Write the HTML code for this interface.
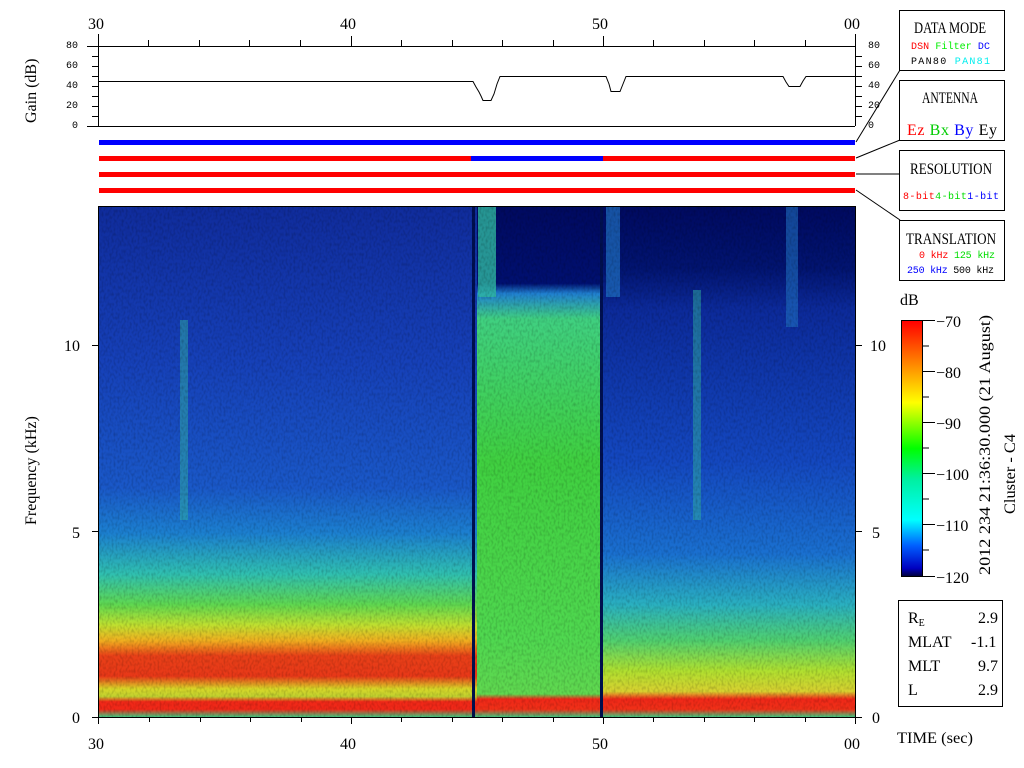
<!DOCTYPE html>
<html><head><style>
body{margin:0;background:#fff;width:1024px;height:768px;overflow:hidden}
svg{display:block}
text{font-family:"Liberation Serif",serif;fill:#000}
.m{font-family:"Liberation Mono",monospace}
</style></head><body>
<svg width="1024" height="768" viewBox="0 0 1024 768" xmlns="http://www.w3.org/2000/svg">
<defs>
<linearGradient id="gA" x1="0" y1="0" x2="0" y2="1">
<stop offset="0" stop-color="#102c9c"/><stop offset="0.3" stop-color="#1640b8"/>
<stop offset="0.55" stop-color="#1a58c8"/><stop offset="0.64" stop-color="#1c80d0"/>
<stop offset="0.72" stop-color="#30c0b0"/><stop offset="0.78" stop-color="#60d850"/>
<stop offset="0.82" stop-color="#c0e030"/><stop offset="0.85" stop-color="#f0b020"/>
<stop offset="0.88" stop-color="#e84018"/><stop offset="0.92" stop-color="#e83818"/>
<stop offset="0.945" stop-color="#d8d828"/><stop offset="0.96" stop-color="#c0d030"/>
<stop offset="0.97" stop-color="#f02818"/><stop offset="0.985" stop-color="#f02818"/>
<stop offset="1" stop-color="#40c880"/></linearGradient>
<linearGradient id="gB" x1="0" y1="0" x2="0" y2="1">
<stop offset="0" stop-color="#000a60"/><stop offset="0.15" stop-color="#001070"/>
<stop offset="0.17" stop-color="#2080d0"/><stop offset="0.22" stop-color="#40d080"/>
<stop offset="0.5" stop-color="#40d040"/><stop offset="0.85" stop-color="#50d850"/>
<stop offset="0.955" stop-color="#60d850"/><stop offset="0.965" stop-color="#f02818"/>
<stop offset="0.985" stop-color="#f03018"/><stop offset="1" stop-color="#40c880"/></linearGradient>
<linearGradient id="gC" x1="0" y1="0" x2="0" y2="1">
<stop offset="0" stop-color="#000a60"/><stop offset="0.12" stop-color="#021470"/>
<stop offset="0.2" stop-color="#0c2a9a"/><stop offset="0.5" stop-color="#1448c0"/>
<stop offset="0.68" stop-color="#1a70d0"/><stop offset="0.78" stop-color="#2ab0c0"/>
<stop offset="0.85" stop-color="#50d070"/><stop offset="0.91" stop-color="#b0e030"/>
<stop offset="0.95" stop-color="#d8d030"/><stop offset="0.965" stop-color="#f02818"/>
<stop offset="0.985" stop-color="#f03018"/><stop offset="1" stop-color="#40c880"/></linearGradient>
<linearGradient id="cb" x1="0" y1="0" x2="0" y2="1">
<stop offset="0" stop-color="#ff0000"/><stop offset="0.2" stop-color="#ffa000"/>
<stop offset="0.32" stop-color="#ffff00"/><stop offset="0.5" stop-color="#00ff00"/>
<stop offset="0.62" stop-color="#00f0a0"/><stop offset="0.78" stop-color="#00ffff"/>
<stop offset="0.88" stop-color="#0060ff"/><stop offset="0.97" stop-color="#0000c0"/>
<stop offset="1" stop-color="#000040"/></linearGradient>
<filter id="nz" x="0" y="0" width="1" height="1"><feTurbulence type="fractalNoise" baseFrequency="0.5 0.3" numOctaves="1" result="t"/><feColorMatrix type="matrix" values="0 0 0 0 0  0 0 0 0 0  0 0 0 0 0  0 0 0 -1.2 0.7" in="t" result="a"/><feComposite in="a" in2="SourceGraphic" operator="in"/></filter>
</defs>
<rect x="99" y="207" width="378" height="510" fill="url(#gA)"/>
<rect x="477" y="207" width="126" height="510" fill="url(#gB)"/>
<rect x="603" y="207" width="252" height="510" fill="url(#gC)"/>
<rect x="478" y="207" width="18" height="90" fill="#30b8a0" opacity="0.8"/>
<rect x="606" y="207" width="14" height="90" fill="#2070c0" opacity="0.7"/>
<rect x="786" y="207" width="12" height="120" fill="#2070c0" opacity="0.6"/>
<rect x="180" y="320" width="8" height="200" fill="#30b0a0" opacity="0.5"/>
<rect x="693" y="290" width="8" height="230" fill="#30b0a0" opacity="0.5"/>
<rect x="472" y="207" width="3" height="510" fill="#001050"/>
<rect x="600" y="207" width="3" height="510" fill="#001050"/>
<rect x="99" y="207" width="756" height="510" fill="#000" filter="url(#nz)" opacity="0.35"/>
<g stroke="#000" stroke-width="1" fill="none">
<rect x="98.5" y="206.5" width="757" height="511"/>
<line x1="98.5" y1="718" x2="98.5" y2="724"/><line x1="351.5" y1="718" x2="351.5" y2="724"/><line x1="603.5" y1="718" x2="603.5" y2="724"/><line x1="855.5" y1="718" x2="855.5" y2="724"/>
<line x1="149.5" y1="718" x2="149.5" y2="722"/><line x1="200.5" y1="718" x2="200.5" y2="722"/><line x1="250.5" y1="718" x2="250.5" y2="722"/><line x1="301.5" y1="718" x2="301.5" y2="722"/><line x1="401.5" y1="718" x2="401.5" y2="722"/><line x1="452.5" y1="718" x2="452.5" y2="722"/><line x1="502.5" y1="718" x2="502.5" y2="722"/><line x1="553.5" y1="718" x2="553.5" y2="722"/><line x1="653.5" y1="718" x2="653.5" y2="722"/><line x1="704.5" y1="718" x2="704.5" y2="722"/><line x1="754.5" y1="718" x2="754.5" y2="722"/><line x1="805.5" y1="718" x2="805.5" y2="722"/>
<line x1="92" y1="717.5" x2="98" y2="717.5"/><line x1="92" y1="531.5" x2="98" y2="531.5"/><line x1="92" y1="345.5" x2="98" y2="345.5"/>
<line x1="856" y1="717.5" x2="862" y2="717.5"/><line x1="856" y1="531.5" x2="862" y2="531.5"/><line x1="856" y1="345.5" x2="862" y2="345.5"/>
<line x1="87" y1="46.5" x2="855" y2="46.5"/><line x1="87" y1="126.5" x2="855" y2="126.5"/>
<line x1="98.5" y1="34" x2="98.5" y2="126"/><line x1="855.5" y1="34" x2="855.5" y2="126"/>
<line x1="148.5" y1="40" x2="148.5" y2="46"/><line x1="199.5" y1="40" x2="199.5" y2="46"/><line x1="249.5" y1="40" x2="249.5" y2="46"/><line x1="300.5" y1="40" x2="300.5" y2="46"/><line x1="351.5" y1="36" x2="351.5" y2="46"/><line x1="401.5" y1="40" x2="401.5" y2="46"/><line x1="452.5" y1="40" x2="452.5" y2="46"/><line x1="502.5" y1="40" x2="502.5" y2="46"/><line x1="553.5" y1="40" x2="553.5" y2="46"/><line x1="603.5" y1="36" x2="603.5" y2="46"/><line x1="653.5" y1="40" x2="653.5" y2="46"/><line x1="704.5" y1="40" x2="704.5" y2="46"/><line x1="754.5" y1="40" x2="754.5" y2="46"/><line x1="805.5" y1="40" x2="805.5" y2="46"/>
<line x1="92" y1="56.5" x2="98" y2="56.5"/><line x1="92" y1="66.5" x2="98" y2="66.5"/><line x1="92" y1="76.5" x2="98" y2="76.5"/><line x1="92" y1="86.5" x2="98" y2="86.5"/><line x1="92" y1="96.5" x2="98" y2="96.5"/><line x1="92" y1="106.5" x2="98" y2="106.5"/><line x1="92" y1="116.5" x2="98" y2="116.5"/>
<line x1="856" y1="56.5" x2="862" y2="56.5"/><line x1="856" y1="66.5" x2="862" y2="66.5"/><line x1="856" y1="76.5" x2="862" y2="76.5"/><line x1="856" y1="86.5" x2="862" y2="86.5"/><line x1="856" y1="96.5" x2="862" y2="96.5"/><line x1="856" y1="106.5" x2="862" y2="106.5"/><line x1="856" y1="116.5" x2="862" y2="116.5"/>
<polyline points="99,81.5 473,81.5 476,87 479,92 481,96 483,100.5 491,100.5 494,94 497,84 500,76.5 606,76.5 609,84 611,91.5 620,91.5 623,84 626,76.5 783,76.5 786,82 789,86.5 800,86.5 803,81 806,76.5 855,76.5"/>
<line x1="856" y1="142" x2="900" y2="70"/><line x1="856" y1="158" x2="900" y2="140"/><line x1="856" y1="174" x2="900" y2="174"/><line x1="856" y1="190" x2="900" y2="220"/>
<rect x="899.5" y="10.5" width="105" height="60"/><rect x="899.5" y="80.5" width="105" height="60"/><rect x="899.5" y="150.5" width="105" height="60"/><rect x="899.5" y="220.5" width="105" height="60"/>
<rect x="898.5" y="600.5" width="104" height="106"/>
<rect x="901.5" y="320.5" width="21" height="256"/>
</g>
<rect x="99" y="140" width="756" height="5" fill="#0000ff"/>
<rect x="99" y="156" width="372" height="5" fill="#ff0000"/><rect x="471" y="156" width="132" height="5" fill="#0000ff"/><rect x="603" y="156" width="252" height="5" fill="#ff0000"/>
<rect x="99" y="172" width="756" height="5" fill="#ff0000"/>
<rect x="99" y="188" width="756" height="5" fill="#ff0000"/>
<rect x="902" y="321" width="20" height="255" fill="url(#cb)"/>
<g stroke="#000"><line x1="923" y1="320.5" x2="935" y2="320.5"/><line x1="923" y1="371.5" x2="935" y2="371.5"/><line x1="923" y1="422.5" x2="935" y2="422.5"/><line x1="923" y1="473.5" x2="935" y2="473.5"/><line x1="923" y1="524.5" x2="935" y2="524.5"/><line x1="923" y1="576.5" x2="935" y2="576.5"/>
<line x1="923" y1="346" x2="929" y2="346"/><line x1="923" y1="397" x2="929" y2="397"/><line x1="923" y1="448" x2="929" y2="448"/><line x1="923" y1="499" x2="929" y2="499"/><line x1="923" y1="550" x2="929" y2="550"/></g>
<g font-size="16">
<text x="936" y="327">−70</text><text x="936" y="378">−80</text><text x="936" y="429">−90</text><text x="936" y="480">−100</text><text x="936" y="531">−110</text><text x="936" y="583">−120</text>
<text x="900" y="305">dB</text>
<text transform="translate(990,575) rotate(-90)" textLength="260" lengthAdjust="spacingAndGlyphs">2012 234 21:36:30.000 (21 August)</text>
<text transform="translate(1015,514) rotate(-90)" textLength="80" lengthAdjust="spacingAndGlyphs">Cluster - C4</text>
<text x="88" y="29">30</text><text x="340" y="29">40</text><text x="592" y="29">50</text><text x="844" y="29">00</text>
<text x="88" y="749">30</text><text x="340" y="749">40</text><text x="592" y="749">50</text><text x="844" y="749">00</text>
<text x="64" y="351">10</text><text x="72" y="538">5</text><text x="72" y="723">0</text>
<text x="870" y="351">10</text><text x="872" y="538">5</text><text x="872" y="723">0</text>
<text transform="translate(36,525) rotate(-90)">Frequency (kHz)</text>
<text transform="translate(36,123) rotate(-90)">Gain (dB)</text>
<text x="897" y="743" textLength="76" lengthAdjust="spacingAndGlyphs">TIME (sec)</text>
<text x="908" y="623">R<tspan font-size="10" dy="3">E</tspan></text><text x="978" y="623">2.9</text>
<text x="908" y="647">MLAT</text><text x="971" y="647">-1.1</text>
<text x="908" y="671">MLT</text><text x="978" y="671">9.7</text>
<text x="908" y="695">L</text><text x="978" y="695">2.9</text>
<text x="914" y="33" textLength="72" lengthAdjust="spacingAndGlyphs">DATA MODE</text>
<text x="922" y="103" textLength="56" lengthAdjust="spacingAndGlyphs">ANTENNA</text>
<text x="910" y="174" textLength="82" lengthAdjust="spacingAndGlyphs">RESOLUTION</text>
<text x="906" y="244" textLength="90" lengthAdjust="spacingAndGlyphs">TRANSLATION</text>
<text x="907" y="135" textLength="90" lengthAdjust="spacing"><tspan style="fill:#f00">Ez</tspan> <tspan style="fill:#0c0">Bx</tspan> <tspan style="fill:#00f">By</tspan> Ey</text>
</g>
<g class="m" font-size="10">
<text x="66" y="48" class="m">80</text><text x="66" y="68" class="m">60</text><text x="66" y="88" class="m">40</text><text x="66" y="108" class="m">20</text><text x="72" y="128" class="m">0</text>
<text x="868" y="48" class="m">80</text><text x="868" y="68" class="m">60</text><text x="868" y="88" class="m">40</text><text x="868" y="108" class="m">20</text><text x="868" y="128" class="m">0</text>
<text x="911" y="49" class="m" textLength="79"><tspan style="fill:#f00">DSN</tspan> <tspan style="fill:#0e0">Filter</tspan> <tspan style="fill:#00f">DC</tspan></text>
<text x="911" y="64" class="m" textLength="79">PAN80 <tspan style="fill:#0ee">PAN81</tspan></text>
<text x="903" y="199" class="m" textLength="96"><tspan style="fill:#f00">8-bit</tspan><tspan style="fill:#0d0">4-bit</tspan><tspan style="fill:#00f">1-bit</tspan></text>
<text x="919" y="258" class="m" textLength="76"><tspan style="fill:#f00">0 kHz</tspan> <tspan style="fill:#0d0">125 kHz</tspan></text>
<text x="907" y="273" class="m" textLength="87"><tspan style="fill:#00f">250 kHz</tspan> 500 kHz</text>
</g>
</svg>
</body></html>
